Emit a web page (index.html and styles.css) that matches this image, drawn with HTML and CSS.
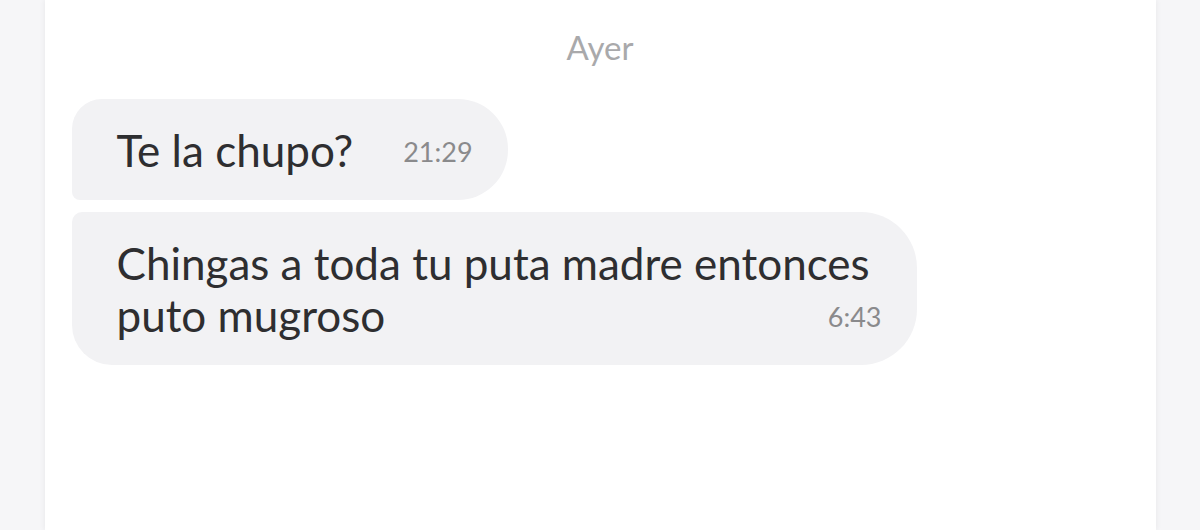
FILE: index.html
```html
<!DOCTYPE html>
<html lang="es">
<head>
    <meta charset="UTF-8">
    <meta name="viewport" content="width=device-width, initial-scale=1.0">
    <title>Chat</title>
    <link rel="stylesheet" href="styles.css">
</head>
<body>

    <div class="chat">
        <div class="day">Ayer</div>

        <div class="group">
            <div class="bubble first">
                <span class="text">Te la chupo?</span>
                <span class="time">21:29</span>
            </div>
            <div class="bubble last">
                <span class="text">Chingas a toda tu puta madre entonces puto mugroso</span>
                <span class="time">6:43</span>
            </div>
        </div>
    </div>

</body>
</html>
```

FILE: styles.css
```css
body {
    font-family: 'Lato', 'Open Sans', sans-serif;
    margin: 0;
    padding: 0;
    background-color: #f6f6f8;
    color: #2e2e30;
}

.chat {
    width: 1111px;
    height: 100vh;
    margin: 0 auto;
    padding: 27px 27px 0;
    box-sizing: border-box;
    background-color: #fff;
    box-shadow: 0 0 6px rgba(0, 0, 0, 0.07);
}

.day {
    text-align: center;
    font-size: 33px;
    line-height: 40px;
    color: #a9a9ab;
    margin-bottom: 32px;
}

.group {
    display: flex;
    flex-direction: column;
    align-items: flex-start;
    gap: 12px;
}

.bubble {
    max-width: 845px;
    box-sizing: border-box;
    padding: 25px 35px 22px 45px;
    background-color: #f2f2f4;
    font-size: 44px;
    line-height: 52px;
    border-radius: 50px;
}

.bubble.first {
    border-radius: 30px 50px 50px 8px;
}

.bubble.last {
    border-radius: 10px 56px 56px 40px;
}

.time {
    float: right;
    margin-top: 2px;
    margin-left: 50px;
    font-size: 27px;
    color: #8a8a8c;
}
```
